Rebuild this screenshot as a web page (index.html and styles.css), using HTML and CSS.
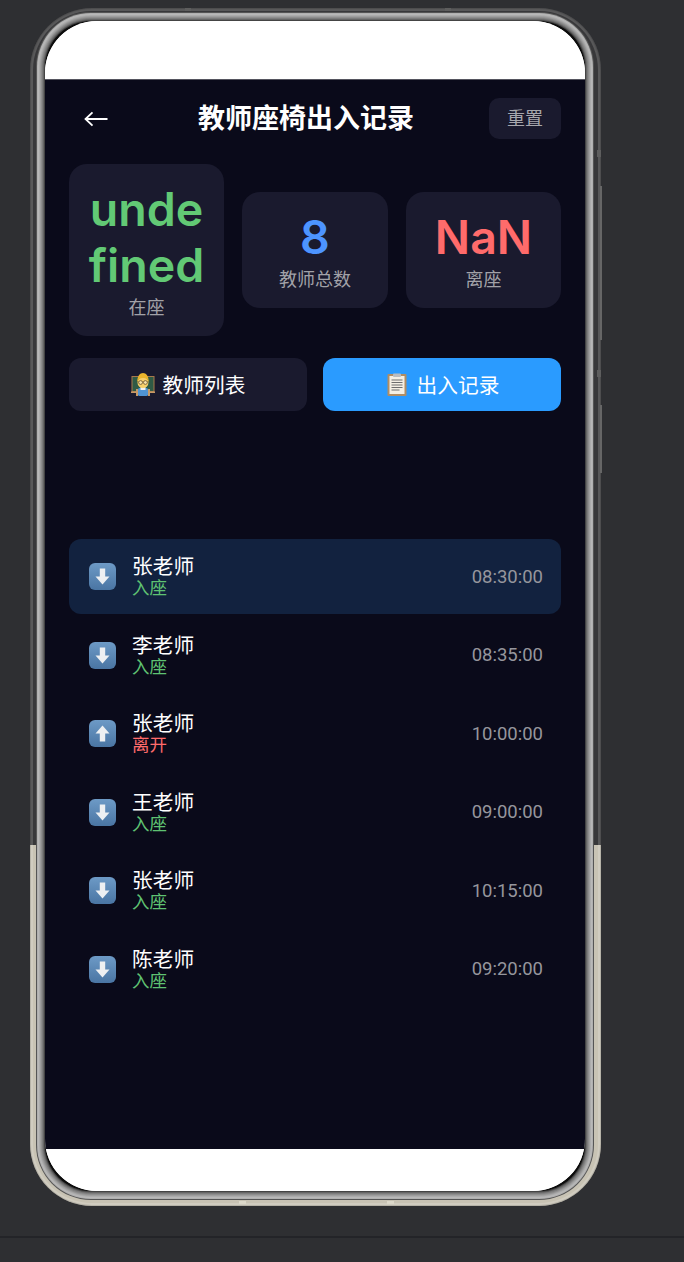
FILE: index.html
```html
<!DOCTYPE html>
<html lang="zh">
<head>
<meta charset="utf-8">
<title>教师座椅出入记录</title>
<link rel="stylesheet" href="styles.css">
</head>
<body>
<svg class="defs" width="0" height="0" aria-hidden="true">
  <defs>
    <linearGradient id="tile" x1="0" y1="0" x2="0" y2="1">
      <stop offset="0" stop-color="#6d9ac6"/>
      <stop offset="1" stop-color="#4a75a3"/>
    </linearGradient>
    <symbol id="down" viewBox="0 0 27 27">
      <rect width="27" height="27" rx="6" fill="url(#tile)"/>
      <path d="M10.800 5.500h5.400v8h4.300L13.500 21.500 6.500 13.500h4.300z" fill="#eef0f2"/>
    </symbol>
    <symbol id="up" viewBox="0 0 27 27">
      <rect width="27" height="27" rx="6" fill="url(#tile)"/>
      <path d="M10.800 21.500h5.400v-8h4.300L13.500 5.500l-7 8h4.300z" fill="#eef0f2"/>
    </symbol>
  </defs>
</svg>
<div class="page">
  <div class="phone">
    <span class="mark mark-t1"></span><span class="mark mark-t2"></span>
    <span class="mark mark-b1"></span><span class="mark mark-b2"></span>
    <span class="mark mark-r1"></span><span class="mark mark-r2"></span>
    <span class="key key-1"></span><span class="key key-2"></span>
    <div class="bezel">
      <div class="screen">
        <div class="safe-top"></div>
        <main class="app">
          <header class="topbar">
            <svg class="back" viewBox="0 0 24 16" width="24" height="16" aria-hidden="true">
              <path d="M23.500 8H1.500M8.500 1.300 1.500 8l7 6.700" fill="none" stroke="#fff" stroke-width="1.800"/>
            </svg>
            <h1 class="title">教师座椅出入记录</h1>
            <button class="reset">重置</button>
          </header>
          <section class="stats">
            <div class="stat">
              <div class="num green">undefined</div>
              <div class="label">在座</div>
            </div>
            <div class="stat">
              <div class="num blue">8</div>
              <div class="label">教师总数</div>
            </div>
            <div class="stat">
              <div class="num red">NaN</div>
              <div class="label">离座</div>
            </div>
          </section>
          <nav class="tabs">
            <button class="tab">
              <svg class="tab-icon" viewBox="0 0 24 24" width="24" height="24" aria-hidden="true">
                <rect x="1" y="4.500" width="22" height="15" fill="#2f5a45" stroke="#a9784a" stroke-width="1"/>
                <rect x="0" y="19.500" width="24" height="1.500" fill="#c79a66"/>
                <rect x="5" y="17" width="2" height="7" fill="#c79a66"/>
                <rect x="17" y="17" width="2" height="7" fill="#c79a66"/>
                <rect x="7" y="16" width="10" height="8" rx="1.500" fill="#4f93d2"/>
                <rect x="9.500" y="15" width="5" height="3" fill="#f2f2f2"/>
                <circle cx="12" cy="10.500" r="5.500" fill="#f6cf6a"/>
                <path d="M6.300 10.500C6 4 9 1 12 1s6 3 5.700 9.500C16.500 7 15 6 12 6s-4.500 1-5.700 4.500z" fill="#eab52c"/>
                <path d="M6.500 10h11" stroke="#6d5330" stroke-width="0.700"/>
                <circle cx="9.600" cy="10.500" r="1.900" fill="#f9e3a8" stroke="#6d5330" stroke-width="0.800"/>
                <circle cx="14.400" cy="10.500" r="1.900" fill="#f9e3a8" stroke="#6d5330" stroke-width="0.800"/>
              </svg>
              <span>教师列表</span>
            </button>
            <button class="tab active">
              <svg class="tab-icon" viewBox="0 0 24 24" width="24" height="24" aria-hidden="true">
                <rect x="2.500" y="2" width="19" height="22" rx="1" fill="#b08d64"/>
                <rect x="4.500" y="4" width="15" height="18" fill="#f4efe4"/>
                <rect x="8" y="1.500" width="8" height="3.500" rx="1" fill="#b9bcc0"/>
                <path d="M6.500 8h11M6.500 10.500h11M6.500 13h11M6.500 15.500h11M6.500 18h8" stroke="#6e6e6e" stroke-width="1"/>
              </svg>
              <span>出入记录</span>
            </button>
          </nav>
          <ul class="records">
            <li class="record current">
              <svg class="rec-icon" width="27" height="27" aria-hidden="true"><use href="#down"/></svg>
              <div class="who"><div class="name">张老师</div><div class="state in">入座</div></div>
              <time class="when">08:30:00</time>
            </li>
            <li class="record">
              <svg class="rec-icon" width="27" height="27" aria-hidden="true"><use href="#down"/></svg>
              <div class="who"><div class="name">李老师</div><div class="state in">入座</div></div>
              <time class="when">08:35:00</time>
            </li>
            <li class="record">
              <svg class="rec-icon" width="27" height="27" aria-hidden="true"><use href="#up"/></svg>
              <div class="who"><div class="name">张老师</div><div class="state out">离开</div></div>
              <time class="when">10:00:00</time>
            </li>
            <li class="record">
              <svg class="rec-icon" width="27" height="27" aria-hidden="true"><use href="#down"/></svg>
              <div class="who"><div class="name">王老师</div><div class="state in">入座</div></div>
              <time class="when">09:00:00</time>
            </li>
            <li class="record">
              <svg class="rec-icon" width="27" height="27" aria-hidden="true"><use href="#down"/></svg>
              <div class="who"><div class="name">张老师</div><div class="state in">入座</div></div>
              <time class="when">10:15:00</time>
            </li>
            <li class="record">
              <svg class="rec-icon" width="27" height="27" aria-hidden="true"><use href="#down"/></svg>
              <div class="who"><div class="name">陈老师</div><div class="state in">入座</div></div>
              <time class="when">09:20:00</time>
            </li>
          </ul>
        </main>
        <div class="safe-bottom"></div>
      </div>
    </div>
  </div>
  <div class="rule"></div>
</div>
</body>
</html>
```
FILE: styles.css
```css
* { box-sizing: border-box; }
html, body { margin: 0; padding: 0; }
body {
  background: #2e2f32;
  height: 1262px;
  overflow: hidden;
  font-family: "Inter", "Noto Sans CJK SC", sans-serif;
}
.defs { position: absolute; }
.page { padding-top: 8px; }
.rule { height: 2px; margin-top: 30px; background: #232428; }

.phone {
  position: relative;
  width: 571px;
  height: 1198px;
  margin-left: 30px;
  padding: 13px 16px 15px 15px;
  border-radius: 62px;
  background: linear-gradient(#38383a 0, #38383a 837px, #c8c3b4 837px, #c8c3b4 100%);
  box-shadow:
    inset 0 0 0 1px rgba(0, 0, 0, 0.12),
    inset 0 0 0 3px rgba(255, 255, 255, 0.16);
}
.bezel {
  height: 1170px;
  border-radius: 46px;
  background: #0c0c0c;
  box-shadow:
    0 0 0 1px #444,
    0 0 0 2px #666,
    0 0 0 3px #7c7c7c,
    0 0 0 4px #8e8e8e,
    0 0 0 5px #9e9e9e,
    0 0 0 6px #acacac,
    0 0 0 7px #b8b8b8,
    0 0 0 8px #b0b0b0,
    0 0 0 9px #555;
}
.screen {
  height: 100%;
  border-radius: 52px;
  overflow: hidden;
  background: #fff;
  display: flex;
  flex-direction: column;
}
.safe-top { height: 58px; flex: none; background: #fff; }
.safe-bottom { height: 42px; flex: none; background: #fff; }

.mark { position: absolute; background: #5e5e5e; }
.mark-t1 { left: 155px; top: 0; width: 6px; height: 3px; }
.mark-t2 { left: 415px; top: 0; width: 6px; height: 3px; }
.mark-b1 { left: 209px; bottom: 2px; width: 7px; height: 3px; background: #dcd8ca; }
.mark-b2 { left: 357px; bottom: 2px; width: 7px; height: 3px; background: #dcd8ca; }
.mark-r1 { right: 0; top: 142px; width: 4px; height: 7px; }
.mark-r2 { right: 0; top: 362px; width: 4px; height: 7px; }
.key { position: absolute; right: -1px; width: 2px; background: #666; }
.key-1 { top: 178px; height: 154px; }
.key-2 { top: 397px; height: 68px; }

.app {
  flex: 1;
  min-height: 0;
  background: #0a0a1a;
  border-top: 1px solid #55555f;
  padding: 18px 24px 0;
}
.topbar {
  display: flex;
  align-items: center;
  height: 41px;
  padding-left: 15px;
}
.back { flex: none; }
.title {
  flex: 1;
  margin: 0 0 0 15px;
  color: #fff;
  font-size: 27px;
  line-height: 40px;
  font-weight: 700;
  white-space: nowrap;
  text-align: center;
}
.reset {
  flex: none;
  width: 72px;
  height: 41px;
  border: 0;
  border-radius: 10px;
  background: #1a1a2e;
  color: #a7a7ad;
  font: 18px/26px "Noto Sans CJK SC", sans-serif;
  padding: 0 0 3px;
}

.stats {
  display: grid;
  grid-template-columns: 155px 146px 155px;
  justify-content: space-between;
  align-items: center;
  margin-top: 25px;
}
.stat {
  background: #1a1a2e;
  border-radius: 18px;
  padding: 17px 18px 17px;
  text-align: center;
}
.num {
  font-size: 46.500px;
  line-height: 56px;
  font-weight: 600;
  word-break: break-all;
}
.green { color: #62c975; }
.blue { color: #4d94ff; }
.red { color: #ff6b6b; }
.label {
  color: #a2a2a8;
  font-size: 18px;
  line-height: 26px;
  font-family: "Noto Sans CJK SC", sans-serif;
}

.tabs {
  display: grid;
  grid-template-columns: 1fr 1fr;
  gap: 16px;
  margin-top: 22px;
}
.tab {
  display: flex;
  align-items: center;
  justify-content: center;
  gap: 8px;
  height: 53px;
  padding: 0 0 2px;
  border: 0;
  border-radius: 12px;
  background: #1a1a2e;
  color: #fff;
  font: 20.700px "Noto Sans CJK SC", sans-serif;
}
.tab.active { background: #2a9bff; }
.tab-icon { flex: none; }

.records {
  list-style: none;
  margin: 128px 0 0;
  padding: 0;
}
.record {
  display: flex;
  align-items: center;
  height: 75px;
  margin-bottom: 3.600px;
  padding: 0 18px 0 20px;
  border-radius: 12px;
}
.record.current { background: #12223f; }
.rec-icon { flex: none; margin-right: 16px; }
.who { flex: 1; padding-bottom: 3px; }
.name {
  color: #fff;
  font: 20.700px/24px "Noto Sans CJK SC", sans-serif;
}
.state { font: 17.500px/20px "Noto Sans CJK SC", sans-serif; }
.state.in { color: #5fc272; }
.state.out { color: #ff6b6b; }
.when {
  color: #96969d;
  font: 18.500px "Roboto", sans-serif;
}
```
